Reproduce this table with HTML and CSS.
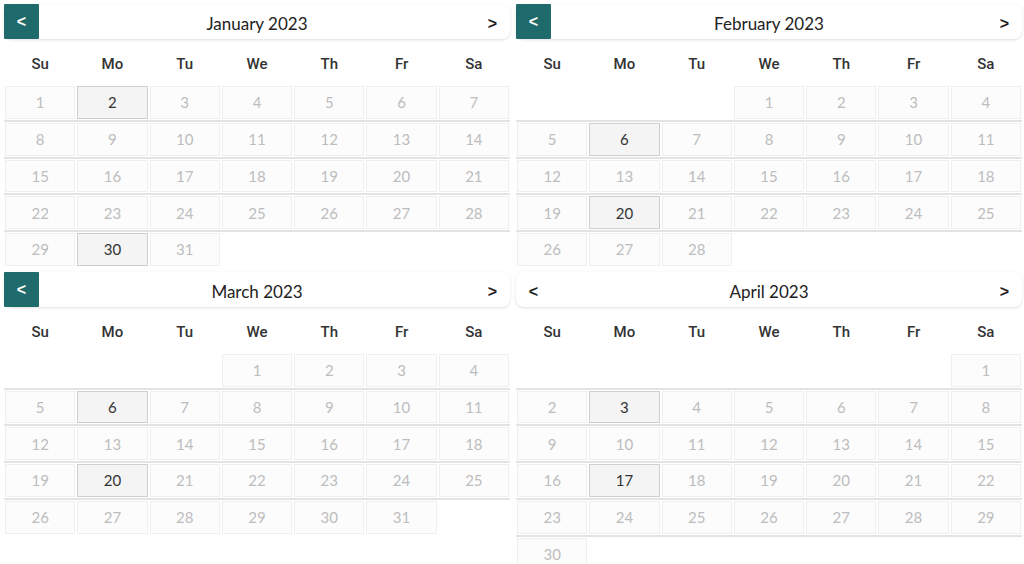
FILE: index.html
```html
<!DOCTYPE html>
<html>
<head>
<meta charset="utf-8">
<link rel="stylesheet" href="styles.css">
</head>
<body>
<div class="page">
  <section class="cal">
    <div class="head"><span class="prev teal">&lt;</span><span class="title">January 2023</span><span class="next">&gt;</span></div>
    <div class="wd"><span>Su</span><span>Mo</span><span>Tu</span><span>We</span><span>Th</span><span>Fr</span><span>Sa</span></div>
    <div class="wk"><span class="d">1</span><span class="d on">2</span><span class="d">3</span><span class="d">4</span><span class="d">5</span><span class="d">6</span><span class="d">7</span></div>
    <div class="wk"><span class="d">8</span><span class="d">9</span><span class="d">10</span><span class="d">11</span><span class="d">12</span><span class="d">13</span><span class="d">14</span></div>
    <div class="wk"><span class="d">15</span><span class="d">16</span><span class="d">17</span><span class="d">18</span><span class="d">19</span><span class="d">20</span><span class="d">21</span></div>
    <div class="wk"><span class="d">22</span><span class="d">23</span><span class="d">24</span><span class="d">25</span><span class="d">26</span><span class="d">27</span><span class="d">28</span></div>
    <div class="wk"><span class="d">29</span><span class="d on">30</span><span class="d">31</span></div>
  </section>
  <section class="cal">
    <div class="head"><span class="prev teal">&lt;</span><span class="title">February 2023</span><span class="next">&gt;</span></div>
    <div class="wd"><span>Su</span><span>Mo</span><span>Tu</span><span>We</span><span>Th</span><span>Fr</span><span>Sa</span></div>
    <div class="wk"><span class="e"></span><span class="e"></span><span class="e"></span><span class="d">1</span><span class="d">2</span><span class="d">3</span><span class="d">4</span></div>
    <div class="wk"><span class="d">5</span><span class="d on">6</span><span class="d">7</span><span class="d">8</span><span class="d">9</span><span class="d">10</span><span class="d">11</span></div>
    <div class="wk"><span class="d">12</span><span class="d">13</span><span class="d">14</span><span class="d">15</span><span class="d">16</span><span class="d">17</span><span class="d">18</span></div>
    <div class="wk"><span class="d">19</span><span class="d on">20</span><span class="d">21</span><span class="d">22</span><span class="d">23</span><span class="d">24</span><span class="d">25</span></div>
    <div class="wk"><span class="d">26</span><span class="d">27</span><span class="d">28</span></div>
  </section>
  <section class="cal">
    <div class="head"><span class="prev teal">&lt;</span><span class="title">March 2023</span><span class="next">&gt;</span></div>
    <div class="wd"><span>Su</span><span>Mo</span><span>Tu</span><span>We</span><span>Th</span><span>Fr</span><span>Sa</span></div>
    <div class="wk"><span class="e"></span><span class="e"></span><span class="e"></span><span class="d">1</span><span class="d">2</span><span class="d">3</span><span class="d">4</span></div>
    <div class="wk"><span class="d">5</span><span class="d on">6</span><span class="d">7</span><span class="d">8</span><span class="d">9</span><span class="d">10</span><span class="d">11</span></div>
    <div class="wk"><span class="d">12</span><span class="d">13</span><span class="d">14</span><span class="d">15</span><span class="d">16</span><span class="d">17</span><span class="d">18</span></div>
    <div class="wk"><span class="d">19</span><span class="d on">20</span><span class="d">21</span><span class="d">22</span><span class="d">23</span><span class="d">24</span><span class="d">25</span></div>
    <div class="wk"><span class="d">26</span><span class="d">27</span><span class="d">28</span><span class="d">29</span><span class="d">30</span><span class="d">31</span></div>
  </section>
  <section class="cal">
    <div class="head"><span class="prev plain">&lt;</span><span class="title">April 2023</span><span class="next">&gt;</span></div>
    <div class="wd"><span>Su</span><span>Mo</span><span>Tu</span><span>We</span><span>Th</span><span>Fr</span><span>Sa</span></div>
    <div class="wk"><span class="e"></span><span class="e"></span><span class="e"></span><span class="e"></span><span class="e"></span><span class="e"></span><span class="d">1</span></div>
    <div class="wk"><span class="d">2</span><span class="d on">3</span><span class="d">4</span><span class="d">5</span><span class="d">6</span><span class="d">7</span><span class="d">8</span></div>
    <div class="wk"><span class="d">9</span><span class="d">10</span><span class="d">11</span><span class="d">12</span><span class="d">13</span><span class="d">14</span><span class="d">15</span></div>
    <div class="wk"><span class="d">16</span><span class="d on">17</span><span class="d">18</span><span class="d">19</span><span class="d">20</span><span class="d">21</span><span class="d">22</span></div>
    <div class="wk"><span class="d">23</span><span class="d">24</span><span class="d">25</span><span class="d">26</span><span class="d">27</span><span class="d">28</span><span class="d">29</span></div>
    <div class="wk"><span class="d">30</span></div>
  </section>
</div>
</body>
</html>
```
FILE: styles.css
```css
html, body {
  margin: 0;
  padding: 0;
  background: #fff;
  overflow: hidden;
}
body {
  width: 1024px;
  height: 564px;
}
.page {
  display: grid;
  grid-template-columns: 506px 506px;
  column-gap: 6px;
  row-gap: 5px;
  align-items: start;
  padding: 4px;
}
.cal {
  display: flex;
  flex-direction: column;
}
.head {
  display: flex;
  align-items: center;
  height: 35px;
  background: #fff;
  border-radius: 8px;
  box-shadow: 0 1px 3px rgba(0, 0, 0, 0.13);
  font-family: Lato, "Liberation Sans", sans-serif;
}
.prev, .next {
  width: 35px;
  height: 35px;
  display: flex;
  align-items: center;
  justify-content: center;
  font-family: "Liberation Sans", sans-serif;
  font-weight: 700;
  font-size: 16px;
  color: #222;
  padding-top: 1px;
  box-sizing: border-box;
}
.next, .prev.plain {
  padding-top: 5px;
}
.prev.teal {
  background: #1f6b6b;
  color: #fff;
  border-radius: 1px;
}
.title {
  flex: 1;
  text-align: center;
  font-size: 17px;
  color: #222;
  padding-top: 4px;
}
.wd {
  display: grid;
  grid-template-columns: repeat(7, 1fr);
  height: 46px;
  align-items: center;
  font-family: Roboto, "Liberation Sans", sans-serif;
  font-weight: 500;
  font-size: 15px;
  color: #333;
  text-align: center;
  padding-top: 4px;
  box-sizing: border-box;
}
.wk {
  display: grid;
  grid-template-columns: repeat(7, 1fr);
  padding: 1px 0;
  border-bottom: 2px solid #e3e3e3;
}
.wk:last-child {
  border-bottom: none;
}
.d, .e {
  height: 32.75px;
  margin: 0 1px;
  box-sizing: border-box;
}
.d {
  display: flex;
  align-items: center;
  justify-content: center;
  border: 1px solid #efefef;
  background: #fcfcfc;
  font-family: Lato, "Liberation Sans", sans-serif;
  font-size: 15px;
  color: #bdbdbd;
}
.d.on {
  background: #f4f4f4;
  border-color: #cfcfcf;
  color: #333;
}
```
